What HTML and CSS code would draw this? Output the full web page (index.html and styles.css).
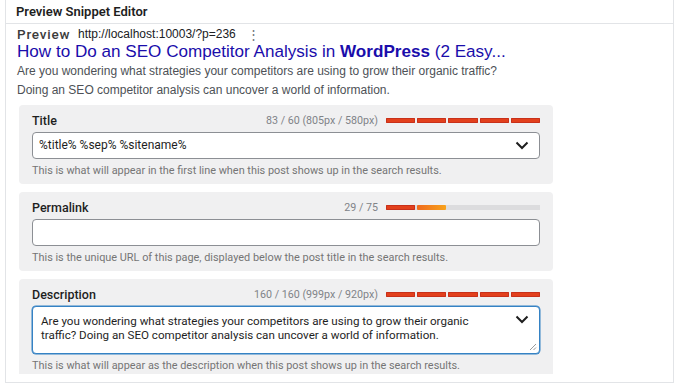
FILE: index.html
```html
<!DOCTYPE html>
<html lang="en">
<head>
  <meta charset="UTF-8" />
  <title>Preview Snippet Editor</title>
  <link rel="stylesheet" href="styles.css">
</head>
<body>

  <div class="panel">
    <!-- Panel header -->
    <div class="panel-header">Preview Snippet Editor</div>

    <div class="panel-body">
      <!-- Google style preview -->
      <div class="preview">
        <div class="preview-top">
          <span class="preview-label">Preview</span>
          <span class="preview-url">http://localhost:10003/?p=236</span>
          <span class="preview-more">⋮</span>
        </div>
        <a class="preview-title" href="#">How to Do an SEO Competitor Analysis in <b>WordPress</b> (2 Easy...</a>
        <p class="preview-desc">Are you wondering what strategies your competitors are using to grow their organic traffic?</p>
        <p class="preview-desc">Doing an SEO competitor analysis can uncover a world of information.</p>
      </div>

      <!-- Title -->
      <div class="field">
        <div class="field-head">
          <span class="field-label">Title</span>
          <span class="counter">83 / 60 (805px / 580px)</span>
          <div class="bars">
            <span class="seg red"></span><span class="seg red"></span><span class="seg red"></span><span class="seg red"></span><span class="seg red"></span>
          </div>
        </div>
        <div class="control">
          <div class="input">%title% %sep% %sitename%</div>
          <svg class="chevron" width="14" height="9" viewBox="0 0 14 9"><polyline points="1.5,1.5 7,7 12.5,1.5" fill="none" stroke="#1e1e1e" stroke-width="2"/></svg>
        </div>
        <p class="help">This is what will appear in the first line when this post shows up in the search results.</p>
      </div>

      <!-- Permalink -->
      <div class="field">
        <div class="field-head">
          <span class="field-label">Permalink</span>
          <span class="counter">29 / 75</span>
          <div class="bars track">
            <span class="seg red"></span><span class="seg orange"></span><span class="seg empty"></span><span class="seg empty"></span><span class="seg empty"></span>
          </div>
        </div>
        <div class="control">
          <div class="input"></div>
        </div>
        <p class="help">This is the unique URL of this page, displayed below the post title in the search results.</p>
      </div>

      <!-- Description -->
      <div class="field last">
        <div class="field-head">
          <span class="field-label">Description</span>
          <span class="counter">160 / 160 (999px / 920px)</span>
          <div class="bars">
            <span class="seg red"></span><span class="seg red"></span><span class="seg red"></span><span class="seg red"></span><span class="seg red"></span>
          </div>
        </div>
        <div class="control">
          <div class="input textarea">Are you wondering what strategies your competitors are using to grow their organic traffic? Doing an SEO competitor analysis can uncover a world of information.</div>
          <svg class="chevron" width="14" height="9" viewBox="0 0 14 9"><polyline points="1.5,1.5 7,7 12.5,1.5" fill="none" stroke="#1e1e1e" stroke-width="2"/></svg>
          <svg class="grip" width="8" height="8" viewBox="0 0 8 8"><path d="M7 1 L1 7 M7 4.5 L4.5 7" stroke="#9a9a9a" stroke-width="1"/></svg>
        </div>
        <p class="help">This is what will appear as the description when this post shows up in the search results.</p>
      </div>
    </div>
  </div>

</body>
</html>
```

FILE: styles.css
```css
* {
  margin: 0;
  padding: 0;
  box-sizing: border-box;
}

body {
  font-family: Roboto, Inter, sans-serif;
  color: #1e1e1e;
  background: #fff;
  padding: 0 6px 1px 5px;
}

.panel {
  border: 1px solid #e2e4e7;
  border-top: none;
}

.panel-header {
  height: 24px;
  padding: 0 10px;
  font-size: 13px;
  font-weight: 600;
  line-height: 23px;
  border-bottom: 1px solid #e2e4e7;
}

.panel-body {
  padding: 2px 0 8px 11px;
}

/* preview */
.preview-top {
  display: flex;
  align-items: center;
  height: 16px;
}

.preview-label {
  font-size: 13.5px;
  font-weight: 500;
  letter-spacing: 0.8px;
  color: #3c3c3c;
  width: 61px;
}

.preview-url {
  font-family: "Liberation Sans", Arial, sans-serif;
  font-size: 12px;
  color: #202124;
}

.preview-more {
  margin-left: 11px;
  font-size: 13px;
  color: #70757a;
}

.preview-title {
  display: block;
  font-family: "Liberation Sans", Arial, sans-serif;
  font-size: 17.1px;
  line-height: 20px;
  color: #1a0dab;
  text-decoration: none;
}

.preview-desc {
  font-family: "Liberation Sans", Arial, sans-serif;
  font-size: 12px;
  line-height: 19px;
  color: #4d5156;
}

/* fields */
.field {
  width: 534px;
  margin: 5px 0 8px 2px;
  padding: 7px 13px 5px;
  background: #f0f0f1;
  border-radius: 4px;
}

.field.last {
  margin-bottom: 0;
  padding-bottom: 0;
  border-radius: 4px 4px 0 0;
}

.field-head {
  display: flex;
  align-items: center;
  height: 16px;
}

.field-label {
  flex: 1;
  font-size: 12.5px;
  font-weight: 500;
}

.counter {
  font-size: 10.7px;
  color: #808388;
  margin-right: 8px;
}

.bars {
  display: flex;
  gap: 2px;
  width: 154px;
  height: 5px;
}

.bars.track {
  background: #dcdcde;
}

.seg {
  flex: 1;
  border-radius: 1px;
}

.seg.red {
  background: #e2401c;
  box-shadow: inset 0 0 0 1px #c8301a;
}

.seg.orange {
  background: linear-gradient(90deg, #f06a1e, #f7a21b);
}

.control {
  position: relative;
  margin-top: 4px;
}

.input {
  height: 27px;
  padding: 0 30px 0 6px;
  font-size: 12px;
  line-height: 25px;
  background: #fff;
  border: 1px solid #8c8f94;
  border-radius: 4px;
}

.input.textarea {
  height: 48px;
  padding: 7px 40px 0 8px;
  font-size: 11.6px;
  line-height: 14px;
  border: 1.5px solid #3582c4;
  box-shadow: 0 0 0 0.5px #3582c4;
}

.chevron {
  position: absolute;
  right: 11px;
  top: 9px;
}

.textarea + .chevron {
  top: 9px;
}

.grip {
  position: absolute;
  right: 3px;
  bottom: 3px;
}

.help {
  margin-top: 4px;
  font-size: 10.9px;
  line-height: 16px;
  color: #757575;
}
```
